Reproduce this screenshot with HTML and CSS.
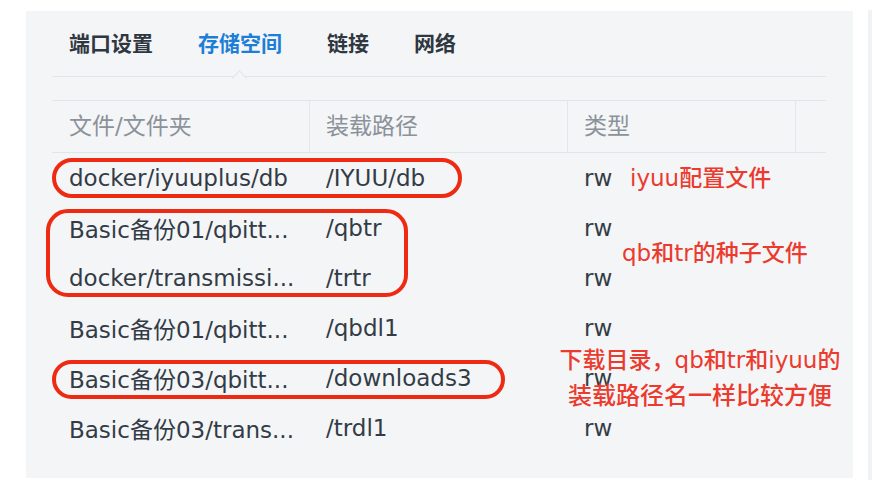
FILE: index.html
```html
<!DOCTYPE html>
<html lang="zh-CN">
<head>
  <meta charset="UTF-8" />
  <title>存储空间</title>
  <link rel="stylesheet" href="styles.css">
</head>
<body>
  <div class="panel">
    <div class="tabs">
      <div class="tab">端口设置</div>
      <div class="tab active">存储空间</div>
      <div class="tab">链接</div>
      <div class="tab">网络</div>
    </div>

    <div class="table">
      <div class="row head">
        <div class="cell">文件/文件夹</div>
        <div class="cell">装载路径</div>
        <div class="cell">类型</div>
        <div class="cell"></div>
      </div>
      <div class="row">
        <div class="cell">docker/iyuuplus/db</div>
        <div class="cell">/IYUU/db</div>
        <div class="cell">rw</div>
        <div class="cell"></div>
      </div>
      <div class="row">
        <div class="cell">Basic备份01/qbitt...</div>
        <div class="cell">/qbtr</div>
        <div class="cell">rw</div>
        <div class="cell"></div>
      </div>
      <div class="row">
        <div class="cell">docker/transmissi...</div>
        <div class="cell">/trtr</div>
        <div class="cell">rw</div>
        <div class="cell"></div>
      </div>
      <div class="row">
        <div class="cell">Basic备份01/qbitt...</div>
        <div class="cell">/qbdl1</div>
        <div class="cell">rw</div>
        <div class="cell"></div>
      </div>
      <div class="row">
        <div class="cell">Basic备份03/qbitt...</div>
        <div class="cell">/downloads3</div>
        <div class="cell">rw</div>
        <div class="cell"></div>
      </div>
      <div class="row">
        <div class="cell">Basic备份03/trans...</div>
        <div class="cell">/trdl1</div>
        <div class="cell">rw</div>
        <div class="cell"></div>
      </div>
    </div>

    <!-- annotations drawn on top of the screenshot -->
    <div class="mark mark-1"></div>
    <div class="mark mark-2"></div>
    <div class="mark mark-3"></div>
    <div class="note note-1">iyuu配置文件</div>
    <div class="note note-2">qb和tr的种子文件</div>
    <div class="note note-3">
      <div class="line-1">下载目录，qb和tr和iyuu的</div>
      <div class="line-2">装载路径名一样比较方便</div>
    </div>
  </div>
  <div class="edge"></div>
</body>
</html>
```

FILE: styles.css
```css
body {
  margin: 0;
  background: #fff;
  font-family: "DejaVu Sans", "Noto Sans CJK SC", sans-serif;
  color: #333c46;
  position: relative;
  height: 488px;
  overflow: hidden;
}

.panel {
  position: relative;
  margin: 11px 0 0 26px;
  width: 827px;
  height: 467px;
  background: #f4f5f7;
  padding: 0 27px 0 26px;
  box-sizing: border-box;
}

.edge {
  position: absolute;
  top: 10px;
  right: 0;
  width: 4px;
  height: 470px;
  background: #f1f2f4;
}

.tabs {
  display: flex;
  gap: 45px;
  height: 66px;
  padding-left: 17px;
  align-items: center;
  border-bottom: 1px solid #e1e4e8;
  box-sizing: border-box;
}

.tab {
  font-family: "Noto Sans CJK SC", sans-serif;
  font-size: 21px;
  font-weight: bold;
  color: #2f3740;
  position: relative;
  height: 66px;
  line-height: 62px;
}

.tab.active {
  color: #1c7ed6;
}

.tab.active::after {
  content: "";
  position: absolute;
  left: 50%;
  bottom: -1px;
  width: 10px;
  height: 10px;
  margin-left: -6px;
  background: #f4f5f7;
  border-left: 1px solid #e1e4e8;
  border-top: 1px solid #e1e4e8;
  transform: translateY(50%) rotate(45deg);
}

.table {
  margin-top: 23px;
  border-top: 1px solid #e1e4e8;
}

.row {
  display: grid;
  grid-template-columns: 258px 258px 228px 30px;
  height: 50px;
  align-items: center;
}

.cell {
  font-size: 23px;
  padding-left: 17px;
  white-space: nowrap;
  overflow: hidden;
}

.cell + .cell {
  padding-left: 16px;
}

.head {
  height: 51px;
  border-bottom: 1px solid #e1e4e8;
  align-items: stretch;
}

.head .cell {
  color: #8b929a;
  line-height: 50px;
  border-right: 1px solid #e4e7ea;
}

.head .cell:last-child {
  border-right: none;
}

.mark {
  position: absolute;
  border: 4px solid #ee2a12;
  box-sizing: border-box;
}

.mark-1 {
  left: 26px;
  top: 147px;
  width: 410px;
  height: 40px;
  border-radius: 20px;
}

.mark-2 {
  left: 20px;
  top: 198px;
  width: 362px;
  height: 88px;
  border-radius: 22px;
}

.mark-3 {
  left: 26px;
  top: 349px;
  width: 453px;
  height: 39px;
  border-radius: 20px;
}

.note {
  position: absolute;
  color: #eb3b2e;
  font-size: 23px;
  font-weight: 500;
  line-height: 36px;
  white-space: nowrap;
}

.note-1 {
  left: 604px;
  top: 149px;
}

.note-2 {
  left: 596px;
  top: 224px;
}

.note-3 {
  left: 524px;
  width: 300px;
  top: 331px;
  text-align: center;
}

.note-3 .line-2 {
  font-size: 24px;
}
```
